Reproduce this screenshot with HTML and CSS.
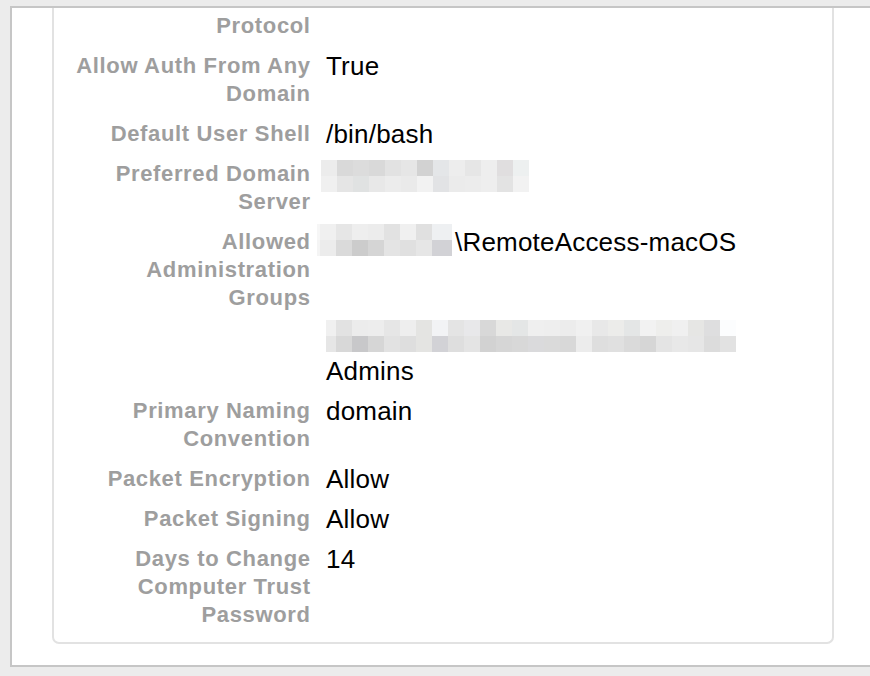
FILE: index.html
```html
<!DOCTYPE html>
<html>
<head>
<meta charset="utf-8">
<link rel="stylesheet" href="styles.css">
</head>
<body>
<div class="window">
  <div class="panel">
    <div class="grid">
      <div class="label">Protocol</div>
      <div class="value"></div>

      <div class="label">Allow Auth From Any<br>Domain</div>
      <div class="value">True</div>

      <div class="label">Default User Shell</div>
      <div class="value">/bin/bash</div>

      <div class="label">Preferred Domain<br>Server</div>
      <div class="value">
        <svg class="blur blur-a" width="208" height="32" viewBox="0 0 208 32">
          <rect x="0" y="0" width="16" height="16" fill="#ececec"/><rect x="16" y="0" width="16" height="16" fill="#d9d9d9"/><rect x="32" y="0" width="16" height="16" fill="#dcdcdc"/><rect x="48" y="0" width="16" height="16" fill="#d9d9d9"/><rect x="64" y="0" width="16" height="16" fill="#e2e2e2"/><rect x="80" y="0" width="16" height="16" fill="#e6e6e6"/><rect x="96" y="0" width="16" height="16" fill="#d2d2d2"/><rect x="112" y="0" width="16" height="16" fill="#e4e6e8"/><rect x="128" y="0" width="16" height="16" fill="#ededed"/><rect x="144" y="0" width="16" height="16" fill="#e6e6e6"/><rect x="160" y="0" width="16" height="16" fill="#eeeeee"/><rect x="176" y="0" width="16" height="16" fill="#e0dedf"/><rect x="192" y="0" width="16" height="16" fill="#edf0f0"/>
          <rect x="0" y="16" width="16" height="16" fill="#f0f0f0"/><rect x="16" y="16" width="16" height="16" fill="#e5e5e5"/><rect x="32" y="16" width="16" height="16" fill="#e0e2e2"/><rect x="48" y="16" width="16" height="16" fill="#e8e8e8"/><rect x="64" y="16" width="16" height="16" fill="#ececec"/><rect x="80" y="16" width="16" height="16" fill="#eaeaea"/><rect x="96" y="16" width="16" height="16" fill="#f2f2f2"/><rect x="112" y="16" width="16" height="16" fill="#e2e3e5"/><rect x="128" y="16" width="16" height="16" fill="#ebebeb"/><rect x="144" y="16" width="16" height="16" fill="#ececec"/><rect x="160" y="16" width="16" height="16" fill="#eeeeee"/><rect x="176" y="16" width="16" height="16" fill="#e3e3e3"/><rect x="192" y="16" width="16" height="16" fill="#f2f2f2"/>
        </svg>
      </div>

      <div class="label">Allowed<br>Administration<br>Groups</div>
      <div class="value">
        <div class="line"><svg class="blur blur-b" width="135" height="32" viewBox="0 0 135 32">
          <rect x="0" y="0" width="3" height="16" fill="#f6f6f6"/><rect x="3" y="0" width="16" height="16" fill="#f0f0f0"/><rect x="19" y="0" width="16" height="16" fill="#e6e6e6"/><rect x="35" y="0" width="16" height="16" fill="#eeeeee"/><rect x="51" y="0" width="16" height="16" fill="#ececec"/><rect x="67" y="0" width="16" height="16" fill="#e2e2e2"/><rect x="83" y="0" width="16" height="16" fill="#f0f0f0"/><rect x="99" y="0" width="16" height="16" fill="#e0e0e0"/><rect x="115" y="0" width="20" height="16" fill="#eef0f2"/>
          <rect x="0" y="16" width="3" height="16" fill="#f4f4f4"/><rect x="3" y="16" width="16" height="16" fill="#ececec"/><rect x="19" y="16" width="16" height="16" fill="#dadada"/><rect x="35" y="16" width="16" height="16" fill="#cccccc"/><rect x="51" y="16" width="16" height="16" fill="#d5d5d5"/><rect x="67" y="16" width="16" height="16" fill="#e4e4e4"/><rect x="83" y="16" width="16" height="16" fill="#e0e0e0"/><rect x="99" y="16" width="16" height="16" fill="#e6e6e6"/><rect x="115" y="16" width="20" height="16" fill="#d2d2d6"/>
        </svg>\RemoteAccess-macOS</div>
        <svg class="blur blur-c" width="410" height="32" viewBox="0 0 410 32">
          <rect x="0" y="0" width="10" height="16" fill="#f0f0f0"/><rect x="10" y="0" width="16" height="16" fill="#e2e2e2"/><rect x="26" y="0" width="16" height="16" fill="#ececec"/><rect x="42" y="0" width="16" height="16" fill="#ededed"/><rect x="58" y="0" width="16" height="16" fill="#e6e6e6"/><rect x="74" y="0" width="16" height="16" fill="#eeeeee"/><rect x="90" y="0" width="16" height="16" fill="#e4e4e2"/><rect x="106" y="0" width="16" height="16" fill="#f2f3f5"/><rect x="122" y="0" width="16" height="16" fill="#e4e4e4"/><rect x="138" y="0" width="16" height="16" fill="#e8e8ea"/><rect x="154" y="0" width="16" height="16" fill="#d8d8d8"/><rect x="170" y="0" width="16" height="16" fill="#e8e8e6"/><rect x="186" y="0" width="16" height="16" fill="#e4e6e6"/><rect x="202" y="0" width="16" height="16" fill="#efefef"/><rect x="218" y="0" width="16" height="16" fill="#eeeeee"/><rect x="234" y="0" width="16" height="16" fill="#ececec"/><rect x="250" y="0" width="16" height="16" fill="#f0f0f0"/><rect x="266" y="0" width="16" height="16" fill="#e8e8e8"/><rect x="282" y="0" width="16" height="16" fill="#ececea"/><rect x="298" y="0" width="16" height="16" fill="#e4e6e6"/><rect x="314" y="0" width="16" height="16" fill="#f2f2f2"/><rect x="330" y="0" width="16" height="16" fill="#eeeeec"/><rect x="346" y="0" width="16" height="16" fill="#f0f0f0"/><rect x="362" y="0" width="16" height="16" fill="#e6e6e4"/><rect x="378" y="0" width="16" height="16" fill="#dededf"/><rect x="394" y="0" width="16" height="16" fill="#fcfdfe"/>
          <rect x="0" y="16" width="10" height="16" fill="#e6e6e6"/><rect x="10" y="16" width="16" height="16" fill="#d8d8d8"/><rect x="26" y="16" width="16" height="16" fill="#c8c8ca"/><rect x="42" y="16" width="16" height="16" fill="#d6d6d6"/><rect x="58" y="16" width="16" height="16" fill="#e2e2e2"/><rect x="74" y="16" width="16" height="16" fill="#dedede"/><rect x="90" y="16" width="16" height="16" fill="#e4e4e2"/><rect x="106" y="16" width="16" height="16" fill="#d2d2d6"/><rect x="122" y="16" width="16" height="16" fill="#dedede"/><rect x="138" y="16" width="16" height="16" fill="#e4e4e4"/><rect x="154" y="16" width="16" height="16" fill="#d2d2d2"/><rect x="170" y="16" width="16" height="16" fill="#d6d6d6"/><rect x="186" y="16" width="16" height="16" fill="#d8d8d8"/><rect x="202" y="16" width="16" height="16" fill="#dadadc"/><rect x="218" y="16" width="16" height="16" fill="#dadada"/><rect x="234" y="16" width="16" height="16" fill="#d8d8d8"/><rect x="250" y="16" width="16" height="16" fill="#ececec"/><rect x="266" y="16" width="16" height="16" fill="#dedede"/><rect x="282" y="16" width="16" height="16" fill="#e0e0e0"/><rect x="298" y="16" width="16" height="16" fill="#dadada"/><rect x="314" y="16" width="16" height="16" fill="#d6d6d6"/><rect x="330" y="16" width="16" height="16" fill="#e4e4e4"/><rect x="346" y="16" width="16" height="16" fill="#e8e8e8"/><rect x="362" y="16" width="16" height="16" fill="#e6e6e6"/><rect x="378" y="16" width="16" height="16" fill="#dcdcdc"/><rect x="394" y="16" width="16" height="16" fill="#e2e2e2"/>
        </svg>
        <div class="line admins">Admins</div>
      </div>

      <div class="label">Primary Naming<br>Convention</div>
      <div class="value">domain</div>

      <div class="label">Packet Encryption</div>
      <div class="value">Allow</div>

      <div class="label">Packet Signing</div>
      <div class="value">Allow</div>

      <div class="label">Days to Change<br>Computer Trust<br>Password</div>
      <div class="value">14</div>
    </div>
  </div>
</div>
</body>
</html>
```

FILE: styles.css
```css
html, body {
  margin: 0;
  padding: 0;
}
body {
  background: #ececec;
  width: 870px;
  height: 676px;
  overflow: hidden;
}
.window {
  margin: 6px 0 0 10px;
  height: 657px;
  background: #ffffff;
  border: 2px solid #c6c6c6;
  border-right: none;
  box-sizing: content-box;
  overflow: hidden;
}
.panel {
  margin-left: 40px;
  width: 778px;
  height: 634px;
  border: 2px solid #e2e2e2;
  border-top: none;
  border-radius: 0 0 7px 7px;
  box-sizing: content-box;
}
.grid {
  display: grid;
  grid-template-columns: 256px 1fr;
  column-gap: 16px;
  row-gap: 12px;
  padding-top: 4px;
}
.label {
  font-family: "Liberation Sans", Arial, sans-serif;
  font-weight: bold;
  font-size: 22px;
  line-height: 28px;
  color: #9e9e9e;
  text-align: right;
  letter-spacing: 0.65px;
  margin-right: -0.65px;
}
.value {
  font-family: "Liberation Sans", Arial, sans-serif;
  font-size: 26px;
  line-height: 28px;
  color: #000000;
  letter-spacing: 0.2px;
}
.line {
  height: 28px;
  white-space: nowrap;
}
.blur {
  display: inline-block;
}
.blur-a {
  vertical-align: top;
  margin: 0 0 -4px -5px;
}
.blur-b {
  vertical-align: bottom;
  margin: -4px 3px 0 -9px;
}
.blur-c {
  display: block;
  margin-top: 64px;
}
.admins {
  margin-top: 5px;
}
```
